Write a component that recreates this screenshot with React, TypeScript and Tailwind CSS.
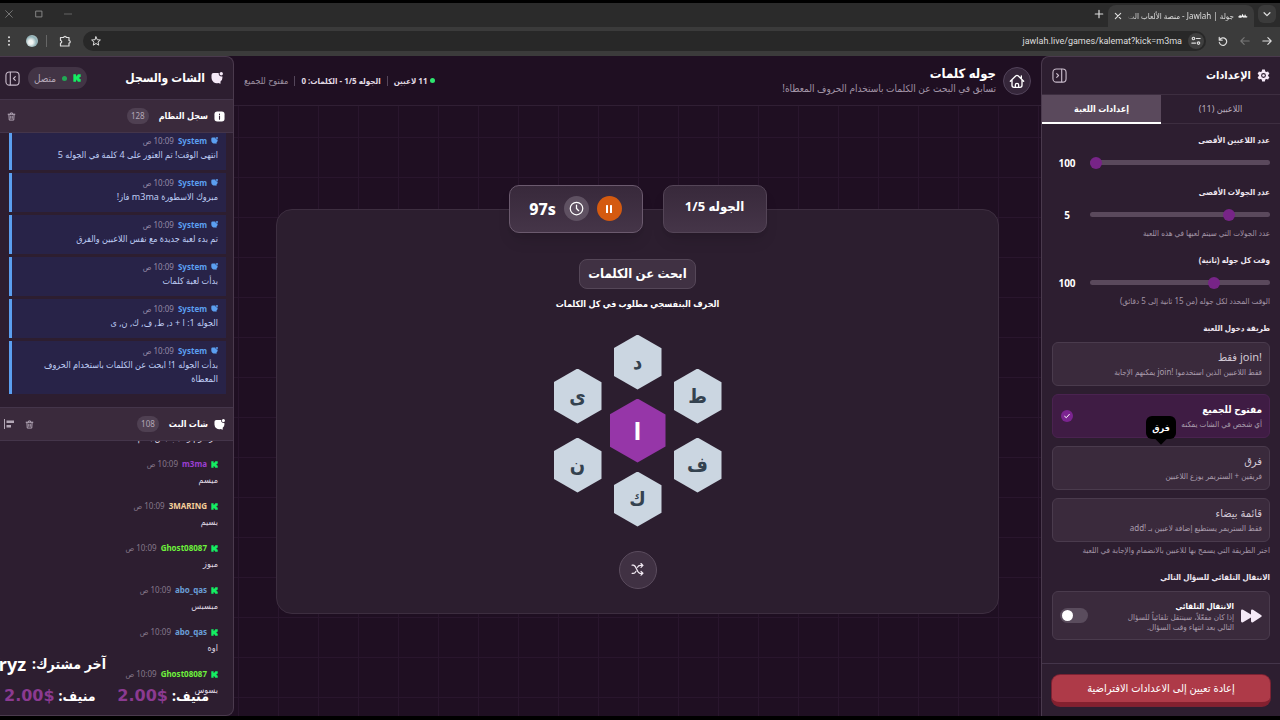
import type { ReactNode } from "react";

type IconProps = { className?: string };

function Stroke({ className, children, width = 1.8 }: IconProps & { children: ReactNode; width?: number }) {
  return (
    <svg viewBox="0 0 24 24" fill="none" stroke="currentColor" strokeWidth={width} strokeLinecap="round" strokeLinejoin="round" className={className} aria-hidden="true">
      {children}
    </svg>
  );
}

function ChatIcon({ className }: IconProps) {
  return (
    <svg viewBox="0 0 24 24" fill="currentColor" className={className} aria-hidden="true">
      <path d="M15.500 2A5.500 5.500 0 0 0 22.500 8.500A10.500 10.500 0 0 1 19 19V23.500L14.500 22A10.500 10.500 0 0 1 1 12V6a4 4 0 0 1 4-4Z" />
      <circle cx="20.500" cy="3.500" r="3.400" />
    </svg>
  );
}

function KickIcon({ className }: IconProps) {
  return (
    <svg viewBox="0 0 24 24" fill="#14ee62" className={className} aria-hidden="true">
      <path d="M1 1h8v6h2V4h3V1h9v8h-3v2h-2v2h2v2h3v8h-9v-3h-3v-3H9v6H1Z" />
    </svg>
  );
}

function TrashIcon({ className }: IconProps) {
  return (
    <Stroke className={className} width={2.6}>
      <path d="M3 6h18M8.500 6l1-3.500h5l1 3.500M5 6l1 15.500h12L19 6M10 11v6M14 11v6" />
    </Stroke>
  );
}

function InfoIcon({ className }: IconProps) {
  return (
    <svg viewBox="0 0 24 24" className={className} aria-hidden="true">
      <rect x="1" y="1" width="22" height="22" rx="6" fill="currentColor" />
      <path d="M12 11v7M12 6.500v1" stroke="#3a2a3c" strokeWidth="2.400" strokeLinecap="round" />
    </svg>
  );
}

function GearIcon({ className }: IconProps) {
  return (
    <svg viewBox="0 0 24 24" fill="currentColor" fillRule="evenodd" className={className} aria-hidden="true">
      <path d="M9.500 1h5l.8 3.400 1.700 1 3.400-1 2.500 4.300L20.500 11v2l2.400 2.300-2.500 4.300-3.400-1-1.700 1-.8 3.400h-5l-.8-3.400-1.700-1-3.400 1-2.500-4.300L3.500 13v-2L1.100 8.700l2.500-4.300 3.400 1 1.700-1ZM12 7.500a4.500 4.500 0 1 0 0 9 4.500 4.500 0 0 0 0-9Z" />
      <circle cx="12" cy="12" r="2.400" />
    </svg>
  );
}

function PanelIcon({ className, flip }: IconProps & { flip?: boolean }) {
  return (
    <Stroke className={className} width={1.8}>
      <rect x="1.500" y="1.500" width="21" height="21" rx="5.500" />
      {flip ? <path d="M15.500 2v20M7.500 9l3 3-3 3" /> : <path d="M8.500 2v20M16.500 9l-3 3 3 3" />}
    </Stroke>
  );
}

function HomeIcon({ className }: IconProps) {
  return (
    <Stroke className={className} width={2}>
      <path d="M2 12.500L10 4.500a2.900 2.900 0 0 1 4 0l8 8M4.500 10.500v8a3 3 0 0 0 3 3h9a3 3 0 0 0 3-3v-8M18.500 8V4.500M9.500 21.500v-3.500a2.500 2.500 0 0 1 5 0v3.500" />
    </Stroke>
  );
}

function BrowserChrome() {
  return (
    <header className="shrink-0 text-[#dedede]">
      <div className="flex h-6 items-end justify-between bg-[#2b2b2b] pr-1">
        <div className="flex items-end gap-1">
          <button aria-label="بحث في علامات التبويب" className="mb-1 grid h-[18px] w-[18px] place-items-center rounded-md bg-[#3b3b3b]">
            <Stroke className="size-2.5" width={3}><path d="M5 9l7 7 7-7" /></Stroke>
          </button>
          <div className="flex h-[22px] w-[146px] items-center gap-1 rounded-t-lg bg-[#3b3b3b] px-1.5">
            <svg viewBox="0 0 24 12" fill="none" stroke="#fff" strokeWidth="3" strokeLinecap="round" className="h-1.5 w-2.5 shrink-0" aria-hidden="true">
              <path d="M2 8h7l2-4 2 4h8M17 4v4M5 5v4" />
            </svg>
            <span className="flex-1 overflow-hidden whitespace-nowrap text-[8px] leading-4 [mask-image:linear-gradient(to_left,#000_90%,transparent)]">جولة | Jawlah - منصة الألعاب الت</span>
            <button aria-label="إغلاق علامة التبويب" className="shrink-0"><Stroke className="size-2" width={3.4}><path d="M4 4l16 16M20 4L4 20" /></Stroke></button>
          </div>
          <button aria-label="علامة تبويب جديدة" className="mb-2"><Stroke className="size-2.5" width={2.8}><path d="M12 3v18M3 12h18" /></Stroke></button>
        </div>
        <div className="flex items-center gap-5 pb-2 pl-1 text-[#8c8c8c]">
          <button aria-label="تصغير"><Stroke className="size-2"><path d="M1 12h22" /></Stroke></button>
          <button aria-label="تكبير"><Stroke className="size-2.5" width={2.2}><path d="M5 5h14v14H5Z" /></Stroke></button>
          <button aria-label="إغلاق"><Stroke className="size-2.5"><path d="M4 4l16 16M20 4L4 20" /></Stroke></button>
        </div>
      </div>
      <div className="flex h-[29px] items-center gap-3 bg-[#3b3b3b] pb-0.5 pl-1 pr-2">
        <div className="flex items-center gap-3">
          <button aria-label="رجوع"><Stroke className="size-2.5" width={2.6}><path d="M2 12h20M14 4l8 8-8 8" /></Stroke></button>
          <button aria-label="تقدم" className="text-[#777]"><Stroke className="size-2.5" width={2.6}><path d="M22 12H2M10 4l-8 8 8 8" /></Stroke></button>
          <button aria-label="إعادة التحميل"><Stroke className="size-2.5" width={2.8}><path d="M3 3v7h7M4 9a9 9 0 1 1-1 6" /></Stroke></button>
        </div>
        <div className="flex h-5 flex-1 items-center justify-between rounded-full bg-[#282828] pl-2 pr-0.5">
          <div className="flex items-center gap-1.5">
            <span className="grid size-4 place-items-center rounded-full bg-[#3f3f3f]">
              <Stroke className="size-2.5" width={2.8}><circle cx="6" cy="6" r="3" /><path d="M13 6h9M2 17h9" /><circle cx="18" cy="17" r="3" /></Stroke>
            </span>
            <span dir="ltr" className="font-[Roboto,sans-serif] text-[9px] leading-4">jawlah.live/games/kalemat?kick=m3ma</span>
          </div>
          <button aria-label="إضافة إلى المفضلة"><Stroke className="size-2.5" width={2.4}><path d="M12 2l3 7 7.500.6-5.700 5 1.800 7.400-6.600-4-6.600 4 1.800-7.400-5.700-5L9 9Z" /></Stroke></button>
        </div>
        <button aria-label="الإضافات"><Stroke className="size-3" width={2.4}><path d="M3 5h6.500a2.500 2.500 0 0 1 5 0H20v6a2.500 2.500 0 0 1 0 5v6H3v-6a2.500 2.500 0 0 0 0-5Z" /></Stroke></button>
        <span className="h-3 w-px bg-[#666]" />
        <span className="-mx-1 size-3 rounded-full bg-[radial-gradient(circle_at_40%_60%,#f1f4f2_20%,#8fb0b5_55%,#c9d5d8)]" />
        <button aria-label="القائمة" className="mr-1">
          <svg viewBox="0 0 24 24" fill="currentColor" className="size-2.5" aria-hidden="true"><circle cx="12" cy="3" r="2.400" /><circle cx="12" cy="12" r="2.400" /><circle cx="12" cy="21" r="2.400" /></svg>
        </button>
      </div>
    </header>
  );
}

function Field({ id, label, value, min, max, help }: { id: string; label: string; value: number; min: number; max: number; help?: string }) {
  return (
    <div>
      <label htmlFor={id} className="block text-[8px] font-bold leading-[14px] text-[#eee6ef]">{label}</label>
      <div className="mt-[7px] flex h-[17px] items-center gap-2">
        <input
          id={id}
          type="range"
          min={min}
          max={max}
          defaultValue={value}
          className="h-[5px] min-w-0 flex-1 appearance-none rounded-full bg-[#5a495c] [&::-webkit-slider-thumb]:size-3 [&::-webkit-slider-thumb]:appearance-none [&::-webkit-slider-thumb]:rounded-full [&::-webkit-slider-thumb]:bg-[#772487]"
        />
        <output htmlFor={id} className="w-[30px] text-center text-[10px] font-bold leading-4 text-white">{value}</output>
      </div>
      {help && <p className="mt-1 text-[8px] leading-3 text-[#a395a6]">{help}</p>}
    </div>
  );
}

const modes = [
  { title: "!join فقط", text: "فقط اللاعبين الذين استخدموا !join يمكنهم الإجابة" },
  { title: "مفتوح للجميع", text: "أي شخص في الشات يمكنه", selected: true },
  { title: "فرق", text: "فريقين + الستريمر يوزع اللاعبين", tip: "فرق" },
  { title: "قائمة بيضاء", text: "فقط الستريمر يستطيع إضافة لاعبين بـ !add" },
];

function Settings() {
  return (
    <aside className="flex w-[239px] shrink-0 flex-col rounded-tl-lg border-l border-t border-[#4a3a4d] bg-[#2d1e30]">
      <div className="flex h-[37px] shrink-0 items-center justify-between px-2.5">
        <h2 className="flex items-center gap-1.5 text-[11px] font-bold text-white"><GearIcon className="size-[13px] text-[#f5e9f7]" />الإعدادات</h2>
        <button aria-label="طي الإعدادات" className="text-[#c9bccb]"><PanelIcon flip className="size-[15px]" /></button>
      </div>
      <div className="flex h-[30px] shrink-0 border-y border-[#3d2e40] text-[9px]">
        <button className="flex-1 text-[#b9acbc]">اللاعبين (11)</button>
        <button className="-mb-px flex-1 border-b-2 border-white bg-[#5a495c] font-bold text-white">إعدادات اللعبة</button>
      </div>
      <div className="flex min-h-0 flex-1 flex-col gap-3.5 overflow-hidden px-2.5 pt-[9px]">
        <Field id="players" label="عدد اللاعبين الأقصى" value={100} min={2} max={100} />
        <Field id="rounds" label="عدد الجولات الأقصى" value={5} min={1} max={20} help="عدد الجولات التي سيتم لعبها في هذه اللعبة" />
        <Field id="time" label="وقت كل جوله (ثانية)" value={100} min={15} max={300} help="الوقت المحدد لكل جوله (من 15 ثانية إلى 5 دقائق)" />
        <section>
          <h3 className="text-[8px] font-bold leading-[14px] text-[#eee6ef]">طريقة دخول اللعبة</h3>
          <div className="mt-[7px] flex flex-col gap-2">
            {modes.map((m) => (
              <button
                key={m.title}
                aria-pressed={!!m.selected}
                className={
                  m.selected
                    ? "relative flex h-11 items-center justify-between rounded-md border border-[#4a2350] bg-[#3f1c44] pl-2 pr-[7px] text-right"
                    : "relative flex h-11 items-center justify-between rounded-md border border-[#4a3b4d] bg-[#3a2a3c] pl-2 pr-[7px] text-right"
                }
              >
                <span className="whitespace-nowrap">
                  <span className={m.selected ? "block text-[10px] font-bold leading-4 text-white" : "block text-[11px] leading-4 text-[#d2c8d4]"}>{m.title}</span>
                  <span className="block text-[8px] leading-[14px] text-[#a99cac]">{m.text}</span>
                </span>
                {m.selected && (
                  <span className="grid size-3 shrink-0 place-items-center rounded-full bg-[#7b2490] text-white">
                    <Stroke className="size-2" width={3}><path d="M5 13l5 4 9-10" /></Stroke>
                  </span>
                )}
                {m.tip && (
                  <span role="tooltip" className="absolute -top-[31px] left-1/2 z-10 grid h-[23px] w-[30px] -translate-x-1/2 place-items-center rounded-md bg-black text-[9px] font-bold text-white">
                    {m.tip}
                    <span className="absolute -bottom-1 left-1/2 size-2 -translate-x-1/2 rotate-45 bg-black" />
                  </span>
                )}
              </button>
            ))}
          </div>
          <p className="mt-0.5 whitespace-nowrap text-[8px] leading-3 text-[#a395a6]">اختر الطريقة التي يسمح بها للاعبين بالانضمام والإجابة في اللعبة</p>
        </section>
        <section>
          <h3 className="text-[8px] font-bold leading-[14px] text-[#eee6ef]">الانتقال التلقائي للسؤال التالي</h3>
          <div className="mt-[7px] flex h-[49px] items-center gap-[7px] rounded-md border border-[#4a3b4d] bg-[#3a2a3c] px-[7px]">
            <svg viewBox="0 0 21 14" fill="#f5e9f7" className="h-3.5 w-[21px] shrink-0" aria-hidden="true">
              <path d="M0 2Q0 0 2 .8L10 5.500V2Q10 0 12 .8L20 6Q21.500 7 20 8L12 13.200Q10 14 10 12V8.500L2 13.200Q0 14 0 12Z" />
            </svg>
            <label htmlFor="auto" className="flex-1 whitespace-nowrap text-[8px] leading-[10px] text-[#a99cac]">
              <span className="block font-bold leading-3 text-white">الانتقال التلقائي</span>
              إذا كان مفعّلاً، سينتقل تلقائياً للسؤال
              <br />
              التالي بعد انتهاء وقت السؤال.
            </label>
            <input
              id="auto"
              type="checkbox"
              role="switch"
              className="flex h-[15px] w-7 shrink-0 appearance-none items-center justify-end rounded-full bg-[#5a4c5d] px-0.5 before:size-[11px] before:rounded-full before:bg-white checked:justify-start checked:bg-[#7b2490]"
            />
          </div>
        </section>
      </div>
      <div className="shrink-0 border-t border-[#44354a] p-2.5">
        <button className="h-[31px] w-full rounded-lg border-b-4 border-[#84202f] bg-[#ae3a48] text-[11px] text-white shadow-[0_0_0_1px_#7c2233]">إعادة تعيين إلى الاعدادات الافتراضية</button>
      </div>
    </aside>
  );
}

function Hex({ children, center }: { children: string; center?: boolean }) {
  return (
    <button
      className={
        center
          ? "grid h-16 w-14 place-items-center bg-[#9636a8] text-[24px] font-bold leading-6 text-white [clip-path:polygon(50%_0,100%_25%,100%_75%,50%_100%,0_75%,0_25%)]"
          : "grid h-[55px] w-12 place-items-center bg-[#cbd6e1] text-[20px] font-bold leading-5 text-[#34424f] [clip-path:polygon(50%_0,100%_25%,100%_75%,50%_100%,0_75%,0_25%)]"
      }
    >
      {children}
    </button>
  );
}

function Game() {
  return (
    <main className="flex min-w-0 flex-1 flex-col bg-[#1f0f22]">
      <div className="flex h-[50px] shrink-0 items-center justify-between border-b border-[#301f34] px-2.5">
        <div className="flex items-center gap-[7px]">
          <a href="#home" aria-label="الرئيسية" className="grid size-7 place-items-center rounded-full border border-[#52435a] bg-[#35263a] text-white"><HomeIcon className="size-4" /></a>
          <div>
            <h1 className="text-[13px] font-bold leading-[15px] text-white">جوله كلمات</h1>
            <p className="text-[10px] leading-[14px] text-[#a294a6]">تسابق في البحث عن الكلمات باستخدام الحروف المعطاة!</p>
          </div>
        </div>
        <div className="flex items-center gap-1.5 text-[8px] leading-4">
          <span className="flex items-center gap-0.5 font-bold text-[#e3dbe5]"><span className="size-[5px] rounded-full bg-[#2ee56f]" />11 لاعبين</span>
          <span className="h-2.5 w-px bg-[#54465a]" />
          <span className="font-bold text-[#e3dbe5]">الجوله 1/5 - الكلمات: 0</span>
          <span className="h-2.5 w-px bg-[#54465a]" />
          <span className="text-[9px] text-[#9c8fa0]">مفتوح للجميع</span>
        </div>
      </div>
      <div className="flex flex-1 items-center bg-[linear-gradient(to_right,#29162d_1px,transparent_1px),linear-gradient(to_bottom,#29162d_1px,transparent_1px)] bg-size-[40px_40px] bg-position-[4px_31px] px-[42px]">
        <section className="flex w-full flex-col items-center rounded-2xl border border-[#3d2e40] bg-[#2c1e2f] pb-6">
          <div className="-mt-[25px] flex gap-5">
            <div className="flex h-12 w-[104px] items-center justify-center rounded-[10px] border border-[#544557] bg-linear-to-b from-[#38293b] to-[#453548] pb-1 text-[13px] font-bold text-white shadow-lg">الجوله 1/5</div>
            <div className="flex h-12 w-[134px] items-center justify-center gap-2 rounded-[10px] border border-[#6b5a6e] bg-linear-to-b from-[#38293b] to-[#453548] text-white shadow-lg">
              <button aria-label="إيقاف مؤقت" className="grid size-[25px] place-items-center rounded-full bg-[#d45a10]">
                <svg viewBox="0 0 8 8" fill="currentColor" className="size-2" aria-hidden="true"><rect x="1" y="0" width="2" height="8" rx=".5" /><rect x="5" y="0" width="2" height="8" rx=".5" /></svg>
              </button>
              <span className="grid size-[25px] place-items-center rounded-full bg-[#5f5162]"><Stroke className="size-[15px]" width={2}><circle cx="12" cy="12" r="10" /><path d="M12 6.500V12l3.500 3.500" /></Stroke></span>
              <span className="text-[16px] font-extrabold">97s</span>
            </div>
          </div>
          <h2 className="mt-[26px] flex h-[30px] items-center rounded-lg border border-[#554758] bg-[#403143] px-2 text-[13px] font-bold text-white">ابحث عن الكلمات</h2>
          <p className="mt-[7px] text-[9px] font-bold leading-4 text-white">الحرف البنفسجي مطلوب في كل الكلمات</p>
          <div className="mt-[23px] flex items-center gap-2">
            <div className="flex flex-col gap-3.5"><Hex>ط</Hex><Hex>ف</Hex></div>
            <div className="flex flex-col items-center gap-[9px]"><Hex>د</Hex><Hex center>ا</Hex><Hex>ك</Hex></div>
            <div className="flex flex-col gap-3.5"><Hex>ى</Hex><Hex>ن</Hex></div>
          </div>
          <button aria-label="خلط الحروف" className="mt-6 grid size-[38px] place-items-center rounded-full border border-[#5b4c5e] bg-[#403143] text-[#f2eaf3]">
            <Stroke className="size-[13px]" width={2.2}><path d="M2 4h2c7 0 6 15 13 15h5M2 19h2c2.500 0 4-1.500 5-3.500M12 8c1-2 2.500-3.500 5-3.500h5M18.500 1L22 4.500 18.500 8M18.500 15.500L22 19l-3.500 3.500" /></Stroke>
          </button>
        </section>
      </div>
    </main>
  );
}

const logs = [
  "انتهى الوقت! تم العثور على 4 كلمة في الجوله 5",
  "مبروك الاسطورة m3ma فاز!",
  "تم بدء لعبة جديدة مع نفس اللاعبين والفرق",
  "بدأت لعبة كلمات",
  "الجوله 1: ا + د, ط, ف, ك, ن, ى",
  "بدأت الجوله 1! ابحث عن الكلمات باستخدام الحروف المعطاة",
];

const chats = [
  { name: "m3ma", color: "text-[#9b3fd0]", text: "مرسوم وسبب بس بسم" },
  { name: "m3ma", color: "text-[#9b3fd0]", text: "ميسم" },
  { name: "3MARING", color: "text-[#f5cf9a]", text: "بسيم" },
  { name: "Ghost08087", color: "text-[#6df23c]", text: "مبوز" },
  { name: "abo_qas", color: "text-[#6a9fd8]", text: "مبسبس" },
  { name: "abo_qas", color: "text-[#6a9fd8]", text: "اوه" },
  { name: "Ghost08087", color: "text-[#6df23c]", text: "بسوس" },
];

function Badge({ children }: { children: ReactNode }) {
  return <span className="mr-1 rounded-full bg-[#4f4052] px-1 text-[8px] font-normal leading-4 text-[#b3a7b6]">{children}</span>;
}

function ChatPanel() {
  return (
    <aside className="relative flex w-[234px] shrink-0 flex-col overflow-hidden rounded-r-lg border-y border-r border-[#4a3a4d] bg-[#2d1e30]">
      <div className="flex h-[42px] shrink-0 items-center justify-between pl-[5px] pr-2.5">
        <h2 className="flex items-center gap-1.5 text-[12px] font-bold text-white"><ChatIcon className="size-3 text-[#f5e9f7]" />الشات والسجل</h2>
        <div className="flex items-center gap-2">
          <span className="flex h-[22px] items-center gap-1.5 rounded-full bg-[#423445] px-1.5 text-[10px] text-[#b3a7b6]">
            <KickIcon className="size-2" /><span className="size-[5px] rounded-full bg-[#22a855]" />متصل
          </span>
          <button aria-label="طي الشات" className="text-[#c9bccb]"><PanelIcon className="size-[15px]" /></button>
        </div>
      </div>
      <div className="flex h-[34px] shrink-0 items-center justify-between border-y border-[#44354a] bg-[#3a2a3c] pl-[7px] pr-2">
        <h3 className="flex items-center gap-1.5 text-[9px] font-bold text-white"><InfoIcon className="size-[11px]" />سجل النظام<Badge>128</Badge></h3>
        <button aria-label="مسح السجل" className="text-[#b3a7b6]"><TrashIcon className="size-[9px]" /></button>
      </div>
      <div className="flex min-h-0 flex-1 flex-col justify-end overflow-hidden">
        <ul className="flex shrink-0 flex-col gap-[3px] pb-[13px] pl-[9px] pr-[7px]">
          {logs.map((t) => (
            <li key={t} className="border-l-[3px] border-[#5b9ff0] bg-[#282348] px-2 pb-2 pt-0.5">
              <div className="flex h-[15px] items-center gap-1 text-[8px]">
                <ChatIcon className="size-[7px] text-[#5b9ff0]" />
                <span className="font-bold text-[#5b9ff0]">System</span>
                <span className="text-[#9489a6]">10:09 ص</span>
              </div>
              <p className="pl-4 text-[9px] leading-[14px] text-[#bfcdf5]">{t}</p>
            </li>
          ))}
        </ul>
      </div>
      <div className="flex h-[34px] shrink-0 items-center justify-between border-y border-[#44354a] bg-[#3a2a3c] pl-1 pr-2">
        <h3 className="flex items-center gap-1.5 text-[9px] font-bold text-white"><ChatIcon className="size-[11px]" />شات البث<Badge>108</Badge></h3>
        <div className="flex items-center gap-[11px] text-[#b3a7b6]">
          <button aria-label="مسح الشات"><TrashIcon className="size-[9px]" /></button>
          <button aria-label="محاذاة"><svg viewBox="0 0 10 10" fill="currentColor" className="size-2.5" aria-hidden="true"><path d="M0 0h1v10H0ZM2.500 1.500H10v2.500H2.500ZM2.500 6H7v2.500H2.500Z" /></svg></button>
        </div>
      </div>
      <div className="flex min-h-0 flex-1 flex-col justify-end overflow-hidden">
        <ul className="shrink-0 pb-[9px] pr-[15px]">
          {chats.map((c, i) => (
            <li key={i} className="pb-2 pt-0.5">
              <div className="flex h-4 items-center gap-1 text-[8px]">
                <KickIcon className="size-[7px]" />
                <span className={`font-bold ${c.color}`}>{c.name}</span>
                <span className="text-[#85788a]">10:09 ص</span>
              </div>
              <p className="text-[9px] leading-4 text-[#ded5e0]">{c.text}</p>
            </li>
          ))}
        </ul>
      </div>
      <div className="absolute inset-x-0 bottom-[7px] text-[14px] font-bold leading-6 text-white">
        <p className="mb-2 flex gap-1.5 whitespace-nowrap pr-[127px]"><span>آخر مشترك:</span><span dir="ltr" className="text-[18px]">Yryz</span></p>
        <p className="flex justify-between whitespace-nowrap pl-1 pr-6">
          <span className="flex gap-1"><span>منيف:</span><span dir="ltr" className="font-['DejaVu_Sans',sans-serif] text-[16px] text-[#8b3a91]">2.00$</span></span>
          <span className="flex gap-1"><span>منيف:</span><span dir="ltr" className="font-['DejaVu_Sans',sans-serif] text-[16px] text-[#8b3a91]">2.00$</span></span>
        </p>
      </div>
    </aside>
  );
}

export default function App() {
  return (
    <div dir="rtl" className="flex h-screen flex-col overflow-hidden bg-black pb-1 pt-[3px] font-['Noto_Sans','DejaVu_Sans_Condensed','DejaVu_Sans',sans-serif]">
      <BrowserChrome />
      <div className="flex min-h-0 flex-1 bg-[#1f0f22]">
        <Settings />
        <Game />
        <ChatPanel />
      </div>
    </div>
  );
}
